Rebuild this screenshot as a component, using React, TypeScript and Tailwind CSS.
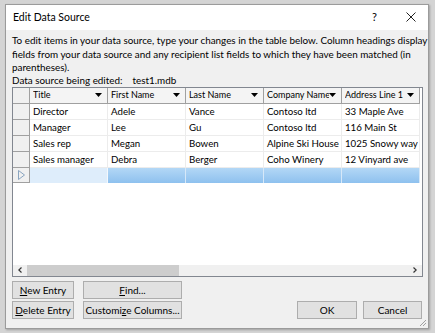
import React from 'react';

const font = "font-['Lato','Liberation_Sans',sans-serif]";

const columns = ['Title', 'First Name', 'Last Name', 'Company Name', 'Address Line 1'];

const rows = [
  ['Director', 'Adele', 'Vance', 'Contoso ltd', '33 Maple Ave'],
  ['Manager', 'Lee', 'Gu', 'Contoso ltd', '116 Main St'],
  ['Sales rep', 'Megan', 'Bowen', 'Alpine Ski House', '1025 Snowy way'],
  ['Sales manager', 'Debra', 'Berger', 'Coho Winery', '12 Vinyard ave'],
];

const Btn: React.FC<{ w: string; children: React.ReactNode }> = ({ w, children }) => (
  <button
    type="button"
    className={`${w} h-[18px] bg-[#e1e1e1] border border-[#adadad] text-[10px] leading-none text-black flex items-center justify-center whitespace-nowrap`}
  >
    {children}
  </button>
);

const App: React.FC = () => {
  return (
    <div className={`w-[435px] h-[333px] bg-[#d4d4d4] pt-[4px] pl-[5px] ${font} text-black`}>
      <div className="w-[424px] h-[325px] border border-[#9b9b9b] bg-[#f0f0f0] flex flex-col relative shadow-[1px_1px_2px_rgba(0,0,0,0.25)]">
        {/* title bar */}
        <div className="h-[25px] bg-white flex items-center pl-[7px] pr-[12px] shrink-0">
          <span className="text-[10.5px] flex-1">Edit Data Source</span>
          <span className="text-[11px] w-[10px] mr-[24px]">?</span>
          <svg width="10" height="10" viewBox="0 0 10 10" className="mb-[1px]">
            <path d="M0.5 0.5 L9.5 9.5 M9.5 0.5 L0.5 9.5" stroke="#222" strokeWidth="1" />
          </svg>
        </div>

        {/* body */}
        <div className="flex-1 flex flex-col px-[6px] pt-[4px]">
          <p className="text-[9.9px] leading-[13.5px] whitespace-nowrap">
            To edit items in your data source, type your changes in the table below. Column headings display
            <br />
            fields from your data source and any recipient list fields to which they have been matched (in
            <br />
            parentheses).
          </p>
          <div className="text-[9.9px] leading-[12px] -mt-[1px] mb-[1px] flex whitespace-nowrap">
            <span className="mr-[10px]">Data source being edited:</span>
            <span>test1.mdb</span>
          </div>

          {/* grid */}
          <div className="w-[411px] h-[190px] border border-[#828790] bg-white flex flex-col">
            <div className="flex flex-col flex-1">
              {/* header */}
              <div className="flex h-[16px]">
                <div className="w-[17px] bg-[#f0f0f0] border-r border-b border-[#a0a0a0]" />
                {columns.map((c) => (
                  <div
                    key={c}
                    className="w-[78px] bg-[#f4f4f4] border-r border-b border-[#a0a0a0] flex items-center pl-[3px] pr-[5px] text-[9px]"
                  >
                    <span className="flex-1 whitespace-nowrap overflow-hidden">{c}</span>
                    <svg width="7" height="4" viewBox="0 0 7 4" className="shrink-0">
                      <path d="M0 0 H7 L3.5 4 Z" fill="#000" />
                    </svg>
                  </div>
                ))}
              </div>
              {/* data rows */}
              {rows.map((r, i) => (
                <div key={i} className="flex h-[16px]">
                  <div className="w-[17px] bg-[#f0f0f0] border-r border-b border-[#a0a0a0]" />
                  {r.map((v, j) => (
                    <div
                      key={j}
                      className="w-[78px] border-r border-b border-[#ececec] flex items-center pl-[3px] text-[9.7px] whitespace-nowrap overflow-hidden"
                    >
                      {v}
                    </div>
                  ))}
                </div>
              ))}
              {/* new row */}
              <div className="flex h-[15px]">
                <div className="w-[17px] bg-[#f0f0f0] border-r border-b border-[#a0a0a0] flex items-center justify-center">
                  <svg width="7" height="10" viewBox="0 0 7 10">
                    <path d="M0.5 0.5 L6.5 5 L0.5 9.5 Z" fill="none" stroke="#8aa5c0" strokeWidth="1" />
                  </svg>
                </div>
                <div className="w-[78px] bg-[#deedfb] border-r border-[#f4f8fc]" />
                {[0, 1, 2, 3].map((k) => (
                  <div
                    key={k}
                    className="w-[78px] bg-gradient-to-b from-[#b3d7f6] to-[#8ec1ee] border-r border-[#d6e8f8]"
                  />
                ))}
              </div>
            </div>
            {/* horizontal scrollbar */}
            <div className="h-[11px] bg-[#f0f0f0] flex items-center">
              <div className="w-[14px] flex items-center justify-center">
                <svg width="4" height="6" viewBox="0 0 4 6">
                  <path d="M3.5 0.5 L0.8 3 L3.5 5.5" fill="none" stroke="#333" strokeWidth="1.2" />
                </svg>
              </div>
              <div className="w-[152px] h-[11px] bg-[#cdcdcd]" />
              <div className="flex-1" />
              <div className="w-[14px] flex items-center justify-center">
                <svg width="4" height="6" viewBox="0 0 4 6">
                  <path d="M0.5 0.5 L3.2 3 L0.5 5.5" fill="none" stroke="#333" strokeWidth="1.2" />
                </svg>
              </div>
            </div>
          </div>

          {/* buttons */}
          <div className="flex mt-[4px] gap-[9px]">
            <Btn w="w-[62px]">
              <span><u>N</u>ew Entry</span>
            </Btn>
            <Btn w="w-[99px]">
              <span><u>F</u>ind...</span>
            </Btn>
          </div>
          <div className="flex mt-[2px] items-center">
            <Btn w="w-[62px]">
              <span><u>D</u>elete Entry</span>
            </Btn>
            <div className="w-[9px]" />
            <Btn w="w-[99px]">
              <span>Customi<u>z</u>e Columns...</span>
            </Btn>
            <div className="flex-1" />
            <Btn w="w-[60px]">
              <span>OK</span>
            </Btn>
            <div className="w-[6px]" />
            <Btn w="w-[59px]">
              <span>Cancel</span>
            </Btn>
          </div>
        </div>

        {/* resize grip */}
        <svg width="10" height="10" viewBox="0 0 10 10" className="absolute right-[1px] bottom-[1px]">
          <path d="M9 3 L3 9 M9 6 L6 9" stroke="#a0a0a0" strokeWidth="1" />
        </svg>
      </div>
    </div>
  );
};

export default App;
